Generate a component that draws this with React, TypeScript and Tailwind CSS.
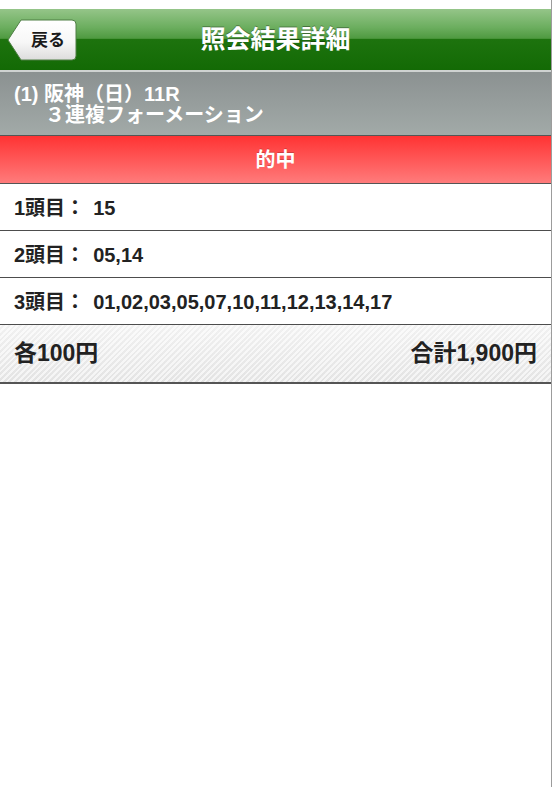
import React from 'react';

const rows = [
  { label: '1頭目：', value: '15' },
  { label: '2頭目：', value: '05,14' },
  { label: '3頭目：', value: '01,02,03,05,07,10,11,12,13,14,17' },
];

function BackButton() {
  return (
    <button
      type="button"
      className="absolute left-[7px] top-[10px] flex h-[42px] w-[70px] items-center justify-center pl-[12px]"
      aria-label="戻る"
    >
      <svg className="absolute inset-0" width="70" height="42" viewBox="0 0 70 42" aria-hidden="true">
        <defs>
          <linearGradient id="backFill" x1="0" y1="0" x2="0" y2="1">
            <stop offset="0" stopColor="#ffffff" />
            <stop offset="0.55" stopColor="#f7f7f7" />
            <stop offset="1" stopColor="#dcdcdc" />
          </linearGradient>
        </defs>
        <path
          d="M14 1 H65 Q69 1 69 5 V37 Q69 41 65 41 H14 L1 21 Z"
          fill="url(#backFill)"
          stroke="#4f7f45"
          strokeWidth="1"
        />
      </svg>
      <span className="relative text-[17px] font-bold leading-none text-[#1a1a1a]">戻る</span>
    </button>
  );
}

export default function App() {
  return (
    <div className="min-h-[787px] w-full border-r border-[#9c9c9c] bg-white font-['Liberation_Sans','Noto_Sans_CJK_JP',sans-serif]">
      <div className="h-[9px] bg-white" />

      {/* Title bar */}
      <header className="relative flex h-[61px] items-center justify-center bg-[linear-gradient(to_bottom,#95c589_0%,#6cae5f_30%,#4f9a41_48%,#1d730e_50%,#136a05_100%)]">
        <BackButton />
        <h1 className="text-[25px] font-bold leading-none text-white [text-shadow:0_-1px_0_rgba(0,0,0,0.35)]">
          照会結果詳細
        </h1>
      </header>

      {/* Race info */}
      <div className="h-[66px] border-t-2 border-b border-t-[#cfd2d1] border-b-[#555] bg-[linear-gradient(to_bottom,#8b9191,#a2aaa8)] pl-[14px] pt-[12px] text-[20px] font-bold leading-[21px] text-white">
        <p>(1) 阪神（日）11R</p>
        <p className="pl-[31px]">３連複フォーメーション</p>
      </div>

      {/* Result */}
      <div className="flex h-[48px] items-center justify-center border-b border-[#555] bg-[linear-gradient(to_bottom,#ff3333,#ff7b7b)]">
        <span className="text-[20px] font-bold text-white [text-shadow:0_-1px_0_rgba(0,0,0,0.2)]">的中</span>
      </div>

      {rows.map((row) => (
        <div
          key={row.label}
          className="flex h-[47px] items-center border-b border-[#4d4d4d] pl-[14px] pt-[2px] text-[20px] font-bold text-[#222]"
        >
          <span>{row.label}</span>
          <span className="ml-[8px]">{row.value}</span>
        </div>
      ))}

      {/* Totals */}
      <div className="flex h-[59px] items-center justify-between border-b-2 border-[#555] bg-[repeating-linear-gradient(-45deg,rgba(255,255,255,0.55)_0px,rgba(255,255,255,0.55)_2px,rgba(0,0,0,0.015)_2px,rgba(0,0,0,0.015)_4px),linear-gradient(to_bottom,#f5f5f5,#e7e7e7)] px-[14px] text-[23px] font-bold text-[#222]">
        <span>各100円</span>
        <span>合計1,900円</span>
      </div>
    </div>
  );
}
